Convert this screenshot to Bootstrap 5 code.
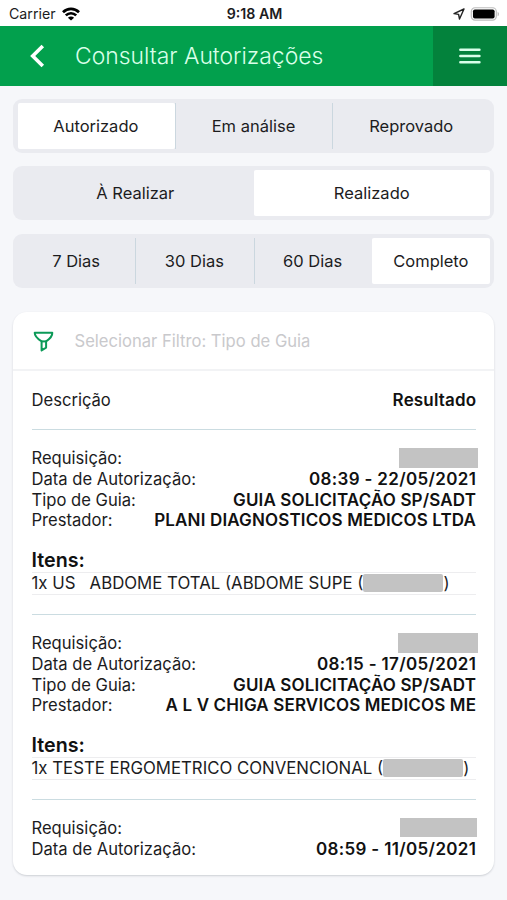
<!DOCTYPE html>
<html lang="pt-BR">
<head>
<meta charset="utf-8">
<meta name="viewport" content="width=device-width, initial-scale=1">
<title>Consultar Autorizações</title>
<link rel="stylesheet" href="https://cdn.jsdelivr.net/npm/bootstrap@5.3.0/dist/css/bootstrap.min.css">
<style>
body{font-family:Inter,"Liberation Sans",sans-serif;background:#f6f7fa;color:#1c1c1e;font-size:16.6px;line-height:20.75px;height:900px;overflow:hidden}
.status-bar{height:26px;background:#fff;font-size:14.2px;padding:2px 7px 0 9px}
.status-bar > *{flex:1 1 0}
.app-head{height:60px;background:#02a04d;color:#d9ffe9}
.app-title{font-size:22.9px;font-weight:300;line-height:61px}
.back-btn{width:75px;padding-left:29.5px}
.menu-btn{width:74px;background:#03823c}
.main-area{padding:13.3px 13px 0 13px}
.seg{height:54px;background:#eaebf0;border-radius:9px;padding:4px 4px 4px 5px;margin-bottom:13.2px}
.seg .seg-item{flex:1 1 0;color:#1c1c1e;padding:0 1px 0 0;border:0;border-radius:2px;font-size:16.5px;line-height:46px;text-align:center}
.seg .seg-item + .seg-item{border-left:1.5px solid #cbd7df;border-radius:0}
.seg .seg-item.picked{background:#fff;border-left-color:#fff;border-radius:2px}
.seg .picked + .seg-item{border-left-color:#cbd7df}
.panel{margin-top:24.6px;height:563px;border:0;border-radius:14px;background:#fff;box-shadow:0 1px 2px rgba(60,70,80,.22)}
.filter-row{height:59px;border-bottom:2px solid #f2f3f5;padding:2px 0 0 20px;color:#c9c9cc}
.panel-body{padding:0 18px 0 18.5px}
.head-row{height:57.6px;padding-top:1px}
.entry{border-top:1.5px solid #cbdce1;height:184.9px;padding-top:18.3px}
.value{font-size:17px;font-weight:600;letter-spacing:.15px;margin-right:-.15px;color:#111}
.value.when{letter-spacing:.34px;margin-right:-.34px}
.redact{background:#c3c3c3;height:19.5px;margin-top:0}
.items-title{font-size:19.7px;font-weight:600;line-height:23px;margin-top:17.6px;color:#111}
.item-line{border-top:1px solid #ededef;border-bottom:1px solid #ededef;height:23px;line-height:21px;font-size:16.8px;white-space:pre}
.redact-sm{display:inline-block;background:#c3c3c3;height:18px;width:80px;border-radius:2px}
</style>
</head>
<body>
<div class="status-bar d-flex align-items-center">
  <div class="d-flex align-items-center"><span>Carrier</span>
    <svg style="margin-left:6px" width="18" height="14" viewBox="0 0 18 14" fill="none" stroke="#000" stroke-width="2.7"><path d="M1 5.2C5.6.7 12.4.7 17 5.2"/><path d="M3.8 8.4c3-2.9 7.4-2.9 10.4 0"/><path d="M9 13.6 5.9 10.7c1.8-1.6 4.4-1.6 6.2 0z" fill="#000" stroke="none"/></svg></div>
  <div class="text-center fw-semibold">9:18 AM</div>
  <div class="d-flex align-items-center justify-content-end">
    <svg width="12" height="12" viewBox="0 0 12 12" fill="none" stroke="#222" stroke-width="1.4" stroke-linejoin="round"><path d="M11 1 1 5.6l4.6.8L6.5 11z"/></svg>
    <svg style="margin-left:5px" width="30" height="14" viewBox="0 0 31 15"><rect x=".8" y=".8" width="26.8" height="13.2" rx="4" fill="#fff" stroke="#bdbdbd" stroke-width="1.3"/><rect x="2.6" y="2.6" width="23.2" height="9.6" rx="2" fill="#000"/><path d="M29 5v5c2-.8 2-4.2 0-5z" fill="#bdbdbd"/></svg>
  </div>
</div>
<header class="app-head d-flex align-items-stretch">
  <div class="back-btn d-flex align-items-center"><svg width="15" height="24" viewBox="0 0 15 24" fill="none" stroke="#fff" stroke-width="3.6"><path d="M12.8 2 2.7 12l10.1 10"/></svg></div>
  <div class="app-title flex-grow-1">Consultar Autorizações</div>
  <div class="menu-btn d-flex align-items-center justify-content-center"><svg width="22" height="16" viewBox="0 0 22 16" fill="none" stroke="#d9ffe9" stroke-width="2.6" stroke-linecap="round"><path d="M1.4 1.8h19M1.4 8h19M1.4 14.2h19"/></svg></div>
</header>
<main class="main-area">
  <div class="seg d-flex"><div class="seg-item picked">Autorizado</div><div class="seg-item">Em análise</div><div class="seg-item">Reprovado</div></div>
  <div class="seg d-flex"><div class="seg-item">À Realizar</div><div class="seg-item picked">Realizado</div></div>
  <div class="seg d-flex"><div class="seg-item">7 Dias</div><div class="seg-item">30 Dias</div><div class="seg-item">60 Dias</div><div class="seg-item picked">Completo</div></div>
  <section class="card panel">
    <div class="filter-row d-flex align-items-center">
      <svg width="21" height="21" viewBox="0 0 21 21" fill="none" stroke="#0c9a58" stroke-width="2" stroke-linejoin="round"><path d="M1.7 1.8h17.6c.2 3.5-2.8 6.3-6.2 8.6v6.2l-4.5 2.8v-9C5 8.1 1.6 5.4 1.7 1.8z"/><path d="M8.3 10.4h4.8"/></svg>
      <span class="ms-3" style="padding-left:4.5px">Selecionar Filtro: Tipo de Guia</span>
    </div>
    <div class="panel-body">
      <div class="head-row d-flex justify-content-between align-items-center"><span>Descrição</span><span class="value">Resultado</span></div>
      <div class="entry">
        <div class="d-flex justify-content-between"><span>Requisição:</span><span class="redact" style="width:79px;margin-right:-2px"></span></div>
        <div class="d-flex justify-content-between"><span>Data de Autorização:</span><span class="value when">08:39 - 22/05/2021</span></div>
        <div class="d-flex justify-content-between"><span>Tipo de Guia:</span><span class="value">GUIA SOLICITAÇÃO SP/SADT</span></div>
        <div class="d-flex justify-content-between"><span>Prestador:</span><span class="value">PLANI DIAGNOSTICOS MEDICOS LTDA</span></div>
        <div class="items-title">Itens:</div>
        <div class="item-line d-flex align-items-center"><span>1x US   ABDOME TOTAL (ABDOME SUPE (</span><span class="redact-sm"></span><span>)</span></div>
      </div>
      <div class="entry">
        <div class="d-flex justify-content-between"><span>Requisição:</span><span class="redact" style="width:80px;margin-right:-2px"></span></div>
        <div class="d-flex justify-content-between"><span>Data de Autorização:</span><span class="value when">08:15 - 17/05/2021</span></div>
        <div class="d-flex justify-content-between"><span>Tipo de Guia:</span><span class="value">GUIA SOLICITAÇÃO SP/SADT</span></div>
        <div class="d-flex justify-content-between"><span>Prestador:</span><span class="value">A L V CHIGA SERVICOS MEDICOS ME</span></div>
        <div class="items-title">Itens:</div>
        <div class="item-line d-flex align-items-center"><span>1x TESTE ERGOMETRICO CONVENCIONAL (</span><span class="redact-sm"></span><span>)</span></div>
      </div>
      <div class="entry h-auto">
        <div class="d-flex justify-content-between"><span>Requisição:</span><span class="redact" style="width:77px;margin-right:-1px"></span></div>
        <div class="d-flex justify-content-between"><span>Data de Autorização:</span><span class="value when">08:59 - 11/05/2021</span></div>
      </div>
    </div>
  </section>
</main>
<script src="https://cdn.jsdelivr.net/npm/bootstrap@5.3.0/dist/js/bootstrap.bundle.min.js"></script>
</body>
</html>
